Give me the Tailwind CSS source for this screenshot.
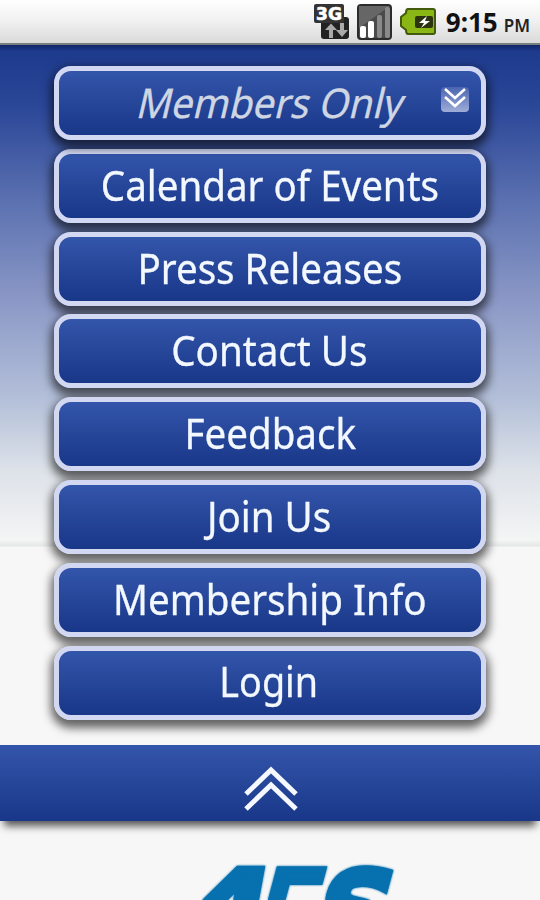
<!DOCTYPE html>
<html lang="en">
<head>
    <meta charset="UTF-8">
    <meta name="viewport" content="width=device-width, initial-scale=1.0">
    <title>Members Only</title>
    <script src="https://cdn.jsdelivr.net/npm/@tailwindcss/browser@4"></script>
</head>
<body class="h-[900px] w-[540px] overflow-hidden bg-[#f7f7f7] font-['Noto_Sans','Open_Sans',sans-serif]">
    <!-- Status bar -->
    <header class="flex h-[45px] items-center justify-end border-b-2 border-[#77807f] bg-linear-to-b from-white via-[#f0f0f0] to-[#dadada] pr-2.5">
        <svg class="mr-[7px] h-[37px] w-9" viewBox="0 0 36 37">
            <rect x="7" y="14" width="28" height="22" rx="3" fill="#222"/>
            <rect x="0" y="1" width="30" height="19" rx="2" fill="#333"/>
            <path d="M15 35V27h-4l6-6.500 6 6.500h-4v8zM26 20h4v7h4l-6 7-6-7h4z" fill="#aaa"/>
            <text x="2" y="16.500" font-family="DejaVu Sans" font-weight="bold" font-size="17" textLength="26" lengthAdjust="spacingAndGlyphs" fill="#fff" stroke="#fff" stroke-width=".6">3G</text>
        </svg>
        <svg class="mr-2 h-9 w-[35px]" viewBox="0 0 35 36">
            <rect x="1" y="1" width="33" height="34" rx="3" fill="#4a4a4a" stroke="#2b2b2b" stroke-width="2"/>
            <path d="M2 2h31L2 24z" fill="#666"/>
            <rect x="3" y="22" width="6" height="12" rx="2" fill="#fff"/>
            <rect x="11" y="17" width="6" height="17" rx="2" fill="#fff"/>
            <rect x="20" y="11" width="5" height="23" rx="2" fill="#8a8a8a"/>
            <rect x="28" y="3" width="5" height="31" rx="2" fill="#8a8a8a"/>
        </svg>
        <svg class="mr-2.5 h-[27px] w-[36px]" viewBox="0 0 36 27">
            <path d="M8 1h25q2 0 2 2v21q0 2-2 2H8q-2 0-2-4l-5-4V9l5-4q0-4 2-4z" fill="#8ab616" stroke="#43590b" stroke-width="2"/>
            <rect x="15" y="8" width="18" height="12" rx="2" fill="#2b3311"/>
            <path d="M27 8l-8 7h5l-3 5 9-7h-5z" fill="#fff"/>
        </svg>
        <span class="mt-0.5 text-[26px] font-bold text-[#111]">9:15</span>
        <span class="ml-1.5 mt-2 text-[17px] font-semibold text-[#222]">PM</span>
    </header>

    <!-- Menu -->
    <main class="h-[700px] bg-[linear-gradient(to_bottom,#0f2668_0px,#1d3a8c_6px,#2a4697_60px,#5a70b0_155px,#8b98c6_255px,#b4c0d9_355px,#dde2e9_425px,#f4f5f5_495px,#e4e7e6_501px,#f7f7f7_502px)] pt-[21px]">
        <nav class="mx-auto flex w-[432px] flex-col gap-[8.8px] text-center text-[41px] text-[#f3f8ff] [-webkit-text-stroke:0.3px]">
            <a class="relative flex h-[74px] items-center justify-center rounded-[17px] border-[5px] border-[#d2d7f2] bg-linear-to-b from-[#3355aa] to-[#193789] text-[#cfd6e3] shadow-[0_5px_10px_3px_#0009]">
                <span class="ml-1 scale-x-94 -skew-x-14">Members Only</span>
                <svg class="absolute right-3 top-4 h-7 w-7" viewBox="0 0 28 28">
                    <defs>
                        <linearGradient id="toggle" x2="0" y2="1">
                            <stop stop-color="#4a64b0"/>
                            <stop offset="1" stop-color="#9fadd8"/>
                        </linearGradient>
                    </defs>
                    <rect width="28" height="25" rx="4" fill="url(#toggle)"/>
                    <path d="M4 2l10 9L24 2M4 10l10 9 10-9" fill="none" stroke="#fff" stroke-width="2.500"/>
                </svg>
            </a>
            <a class="flex h-[74px] items-center justify-center rounded-[17px] border-[5px] border-[#d2d7f2] bg-linear-to-b from-[#3355aa] to-[#193789] shadow-[0_5px_10px_3px_#0009]"><span class="scale-x-94">Calendar of Events</span></a>
            <a class="flex h-[74px] items-center justify-center rounded-[17px] border-[5px] border-[#d2d7f2] bg-linear-to-b from-[#3355aa] to-[#193789] shadow-[0_5px_10px_3px_#0009]"><span class="scale-x-94">Press Releases</span></a>
            <a class="flex h-[74px] items-center justify-center rounded-[17px] border-[5px] border-[#d2d7f2] bg-linear-to-b from-[#3355aa] to-[#193789] pb-px shadow-[0_5px_10px_3px_#0009]"><span class="-ml-0.5 scale-x-94">Contact Us</span></a>
            <a class="flex h-[74px] items-center justify-center rounded-[17px] border-[5px] border-[#d2d7f2] bg-linear-to-b from-[#3355aa] to-[#193789] shadow-[0_5px_10px_3px_#0009]"><span class="scale-x-94">Feedback</span></a>
            <a class="flex h-[74px] items-center justify-center rounded-[17px] border-[5px] border-[#d2d7f2] bg-linear-to-b from-[#3355aa] to-[#193789] pb-px shadow-[0_5px_10px_3px_#0009]"><span class="-ml-0.5 scale-x-94">Join Us</span></a>
            <a class="flex h-[74px] items-center justify-center rounded-[17px] border-[5px] border-[#d2d7f2] bg-linear-to-b from-[#3355aa] to-[#193789] shadow-[0_5px_10px_3px_#0009]"><span class="scale-x-94">Membership Info</span></a>
            <a class="flex h-[74px] items-center justify-center rounded-[17px] border-[5px] border-[#d2d7f2] bg-linear-to-b from-[#3355aa] to-[#193789] pb-px shadow-[0_5px_10px_3px_#0009]"><span class="-ml-0.5 scale-x-92">Login</span></a>
        </nav>
    </main>

    <!-- Collapse bar -->
    <div class="flex h-[76px] items-center justify-center bg-linear-to-b from-[#3355aa] to-[#193789] shadow-[0_9px_8px_-4px_#000a]">
        <svg class="ml-0.5 mt-3 h-[46px] w-[54px]" viewBox="0 0 54 46">
            <path d="M2 28L27 4l25 24M2 43l25-24 25 24" fill="none" stroke="#f5f8ff" stroke-width="5"/>
        </svg>
    </div>

    <!-- Logo -->
    <svg class="mt-[41px] h-[38px] w-[540px] drop-shadow-[0_0_1px_#0770ae]" viewBox="0 862 540 38" font-family="Liberation Sans" font-weight="bold" font-size="116" fill="#0770ae" stroke="#0770ae" stroke-width="7">
        <text transform="translate(153 949) skewX(-31) scale(1.15 1)">A</text>
        <text transform="translate(251 949) skewX(-15) scale(.78 1)" stroke-width="6">F</text>
        <text transform="translate(307 950) skewX(-15) scale(.92 .98)" font-family="DejaVu Sans" font-size="112">S</text>
    </svg>
</body>
</html>
